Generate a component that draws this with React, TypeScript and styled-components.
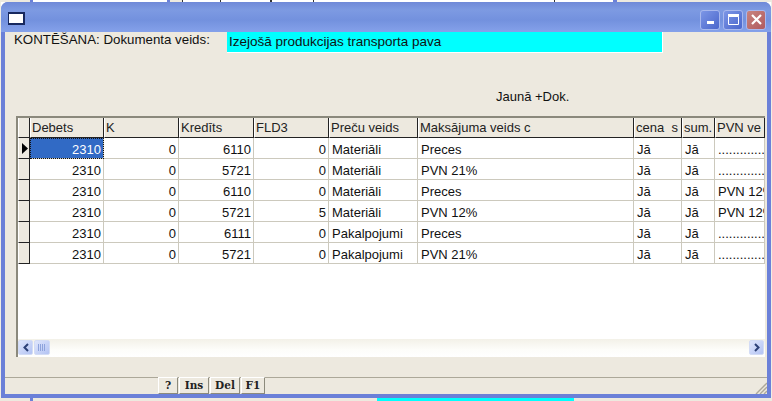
import React from "react";
import styled, { createGlobalStyle } from "styled-components";

const Global = createGlobalStyle`
  html, body { margin: 0; padding: 0; background: #fff; overflow: hidden; }
  body { width: 772px; height: 401px; font-family: "Liberation Sans", Arial, sans-serif; font-size: 13px; color: #111; }
`;
const Page = styled.div`
  width: 772px; height: 401px; display: flex; flex-direction: column; overflow: hidden;
  background: linear-gradient(90deg,#f0ede4 0 1px,#fff 1px 771px,#f0ede4 771px);
`;
const TopStrip = styled.div`
  height: 2px; flex: none;
  background: linear-gradient(90deg,#ede9df 0 30px,#6b80d8 30px 33px,#fff 33px 167px,#6b80d8 167px 170px,#ede9df 170px 182px,#333 182px 183px,#fff 183px 220px,#333 220px 221px,#fff 221px 270px,#333 270px 272px,#fff 272px 313px,#333 313px 314px,#fff 314px 554px,#333 554px 555px,#fff 555px 613px,#6b80d8 613px 617px,#ede9df 617px);
`;
const Window = styled.div`
  height: 396px; flex: none; width: 770px; margin-left: 1px; display: flex; flex-direction: column;
  background: #6b80d8; border-radius: 7px 7px 0 0; padding: 0 4px 4px 4px; box-sizing: border-box;
`;
const TitleBar = styled.div`
  height: 30px; flex: none; margin: 0 -4px; padding: 0 5px 0 7px; display: flex; align-items: center; justify-content: space-between;
  border-radius: 7px 7px 0 0;
  background: linear-gradient(180deg,#6f89d8 0,#7d9ae2 8px,#7391de 18px,#85a1ea 100%);
`;
const AppIcon = styled.div`
  width: 14px; height: 9px; background: #fff; border: 1px solid #17285e; border-top-width: 2px; border-right-width: 2px; border-bottom-width: 2px; margin-top: 3px;
`;
const Controls = styled.div`display: flex; gap: 3px; margin-top: 5px;`;
const Control = styled.div<{ $close?: boolean }>`
  width: 20px; height: 20px; box-sizing: border-box; border: 1px solid #a8b8ee; border-radius: 3px;
  display: flex; align-items: center; justify-content: center;
  background: ${p => p.$close ? "linear-gradient(135deg,#c8847f,#b05a5e)" : "linear-gradient(135deg,#7c96e6,#4a66cc)"};
`;
const Client = styled.div`
  flex: 1; background: #ede9df; display: flex; flex-direction: column; min-height: 0;
`;
const Header = styled.div`
  height: 21px; display: flex; padding: 0 0 0 9px; flex: none;
`;
const Caption = styled.div`
  width: 213px; font-size: 13.3px; line-height: 14px; padding-top: 1px; color: #111; white-space: nowrap;
`;
const Field = styled.div`
  width: 436px; height: 21px; box-sizing: border-box; background: #00ffff; padding: 2px 0 0 2px; font-size: 13.5px; line-height: 16px; white-space: nowrap;
  border-right: 1px solid #fff; border-bottom: 1px solid #fff;
`;
const Note = styled.div`
  height: 63px; flex: none; box-sizing: border-box; padding: 36px 0 0 491px; font-size: 13px; line-height: 15px; white-space: nowrap;
`;
const Grid = styled.div`
  height: 241px; width: 749px; flex: none; margin-left: 11px; box-sizing: border-box; display: flex; flex-direction: column;
  border-top: 2px solid #8b897c; border-left: 2px solid #8b897c; background: #fff; overflow: hidden;
`;
const Table = styled.div`
  flex: 1; display: flex; flex-direction: column; min-height: 0; overflow: hidden;
`;
const COLS = "12px 74px 75px 75px 75px 89px 216px 48px 33px 50px";
const Row = styled.div<{ $head?: boolean }>`
  display: grid; grid-template-columns: ${COLS}; height: ${p => p.$head ? 20 : 21}px; flex: none;
`;
const HeadCell = styled.div`
  background: #ede9df; box-sizing: border-box; padding: 2px 0 0 1px; font-size: 13px; line-height: 15px; white-space: pre; overflow: hidden;
  border-right: 1px solid #222; border-bottom: 1px solid #222; border-left: 1px solid #fff; color: #222;
`;
const Indicator = styled.div`
  background: #ede9df; box-sizing: border-box; border-right: 1px solid #222; border-bottom: 1px solid #222; border-left: 1px solid #fff;
  display: flex; align-items: center; padding-left: 3px;
`;
const Cell = styled.div<{ $num?: boolean; $sel?: boolean }>`
  box-sizing: border-box; padding: 4px 2px 0 3px; font-size: 13px; line-height: 15px; white-space: nowrap; overflow: hidden;
  text-align: ${p => p.$num ? "right" : "left"};
  background: ${p => p.$sel ? "#316ac5" : "#fff"}; color: ${p => p.$sel ? "#fff" : "#111"};
  border-right: 1px solid #ccc9bd; border-bottom: 1px solid #ccc9bd;
  ${p => p.$sel ? "outline: 1px dotted #111; outline-offset: -1px;" : ""}
`;
const Spacer = styled.div`flex: 1;`;
const ScrollBar = styled.div`
  height: 18px; flex: none; display: flex; background: linear-gradient(180deg,#f3f1e8,#fdfdfa 60%,#fff); padding: 1px 1px 2px 0; box-sizing: border-box;
`;
const ScrollBtn = styled.div`
  width: 15px; height: 15px; border: 1px solid #d3dcf5; box-sizing: border-box; border-radius: 2px; background: linear-gradient(135deg,#dfe6fc,#b3c3f3);
  display: flex; align-items: center; justify-content: center; flex: none;
`;
const Thumb = styled(ScrollBtn)`width: 16px; margin-left: 1px;`;
const Track = styled.div`flex: 1;`;
const StatusBar = styled.div`
  height: 17px; flex: none; margin-top: 20px; border-top: 1px solid #aca899; display: flex; padding-left: 153px; position: relative; box-sizing: border-box;
`;
const KeyButton = styled.div<{ $w: number; $gap: number }>`
  width: ${p => p.$w}px; height: 17px; margin-top: -1px; margin-right: ${p => p.$gap}px; box-sizing: border-box; background: #ede9df; text-align: center;
  font-family: "DejaVu Serif", serif; font-weight: 700; font-size: 10.5px; line-height: 15px; color: #222;
  border: 1px solid; border-color: #fff #8c8a7c #8c8a7c #fff;
`;
const Grip = styled.svg`position: absolute; right: 0; bottom: 0;`;
const BottomStrip = styled.div`
  height: 3px; flex: none;
  background: linear-gradient(90deg,#ede9df 0 30px,#6b80d8 30px 33px,#ede9df 33px 377px,#00ffff 377px 574px,#ede9df 574px);
`;

const rows = [
  ["2310","0","6110","0","Materiāli","Preces","Jā","Jā","..............."],
  ["2310","0","5721","0","Materiāli","PVN 21%","Jā","Jā","..............."],
  ["2310","0","6110","0","Materiāli","Preces","Jā","Jā","PVN 12%"],
  ["2310","0","5721","5","Materiāli","PVN 12%","Jā","Jā","PVN 12%"],
  ["2310","0","6111","0","Pakalpojumi","Preces","Jā","Jā","..............."],
  ["2310","0","5721","0","Pakalpojumi","PVN 21%","Jā","Jā","..............."],
];
const heads = ["Debets","K","Kredīts","FLD3","Preču veids","Maksājuma veids c","cena  s","sum.","PVN ve"];

export default function App() {
  return (
    <Page>
      <Global />
      <TopStrip />
      <Window>
        <TitleBar>
          <AppIcon />
          <Controls>
            <Control>
              <svg width="9" height="9" viewBox="0 0 9 9"><rect x="1" y="6" width="7" height="3" fill="#fff" /></svg>
            </Control>
            <Control>
              <svg width="13" height="13" viewBox="0 0 13 13"><path d="M1.5 3.5h10v8h-10z" fill="none" stroke="#fff" /><rect x="1" y="1" width="11" height="2.5" fill="#fff" /></svg>
            </Control>
            <Control $close>
              <svg width="13" height="13" viewBox="0 0 13 13"><path d="M2 2l9 9M11 2l-9 9" stroke="#fff" strokeWidth="2.2" /></svg>
            </Control>
          </Controls>
        </TitleBar>
        <Client>
          <Header>
            <Caption>KONTĒŠANA: Dokumenta veids:</Caption>
            <Field>Izejošā produkcijas transporta pava</Field>
          </Header>
          <Note>Jaunā +Dok.</Note>
          <Grid>
            <Table>
              <Row $head>
                <Indicator />
                {heads.map(h => <HeadCell key={h}>{h}</HeadCell>)}
              </Row>
              {rows.map((r, i) => (
                <Row key={i}>
                  <Indicator>
                    {i === 0 && <svg width="6" height="11" viewBox="0 0 6 11"><path d="M0 0l6 5.5L0 11z" fill="#000" /></svg>}
                  </Indicator>
                  {r.map((c, j) => <Cell key={j} $num={j < 4} $sel={i === 0 && j === 0}>{c}</Cell>)}
                </Row>
              ))}
              <Spacer />
            </Table>
            <ScrollBar>
              <ScrollBtn>
                <svg width="8" height="9" viewBox="0 0 8 9"><path d="M6 1L2.5 4.5 6 8" fill="none" stroke="#2d4177" strokeWidth="2" /></svg>
              </ScrollBtn>
              <Thumb>
                <svg width="8" height="7" viewBox="0 0 8 7"><path d="M.5 0v7M2.5 0v7M4.5 0v7M6.5 0v7" stroke="#8ea3dc" /></svg>
              </Thumb>
              <Track />
              <ScrollBtn>
                <svg width="8" height="9" viewBox="0 0 8 9"><path d="M2 1l3.5 3.5L2 8" fill="none" stroke="#2d4177" strokeWidth="2" /></svg>
              </ScrollBtn>
            </ScrollBar>
          </Grid>
          <StatusBar>
            <KeyButton $w={20} $gap={1}>?</KeyButton>
            <KeyButton $w={30} $gap={1}>Ins</KeyButton>
            <KeyButton $w={30} $gap={1}>Del</KeyButton>
            <KeyButton $w={24} $gap={0}>F1</KeyButton>
            <Grip width="12" height="12" viewBox="0 0 12 12"><path d="M12 1L1 12M12 5L5 12M12 9L9 12" stroke="#aca899" strokeWidth="1.4" /></Grip>
          </StatusBar>
        </Client>
      </Window>
      <BottomStrip />
    </Page>
  );
}
